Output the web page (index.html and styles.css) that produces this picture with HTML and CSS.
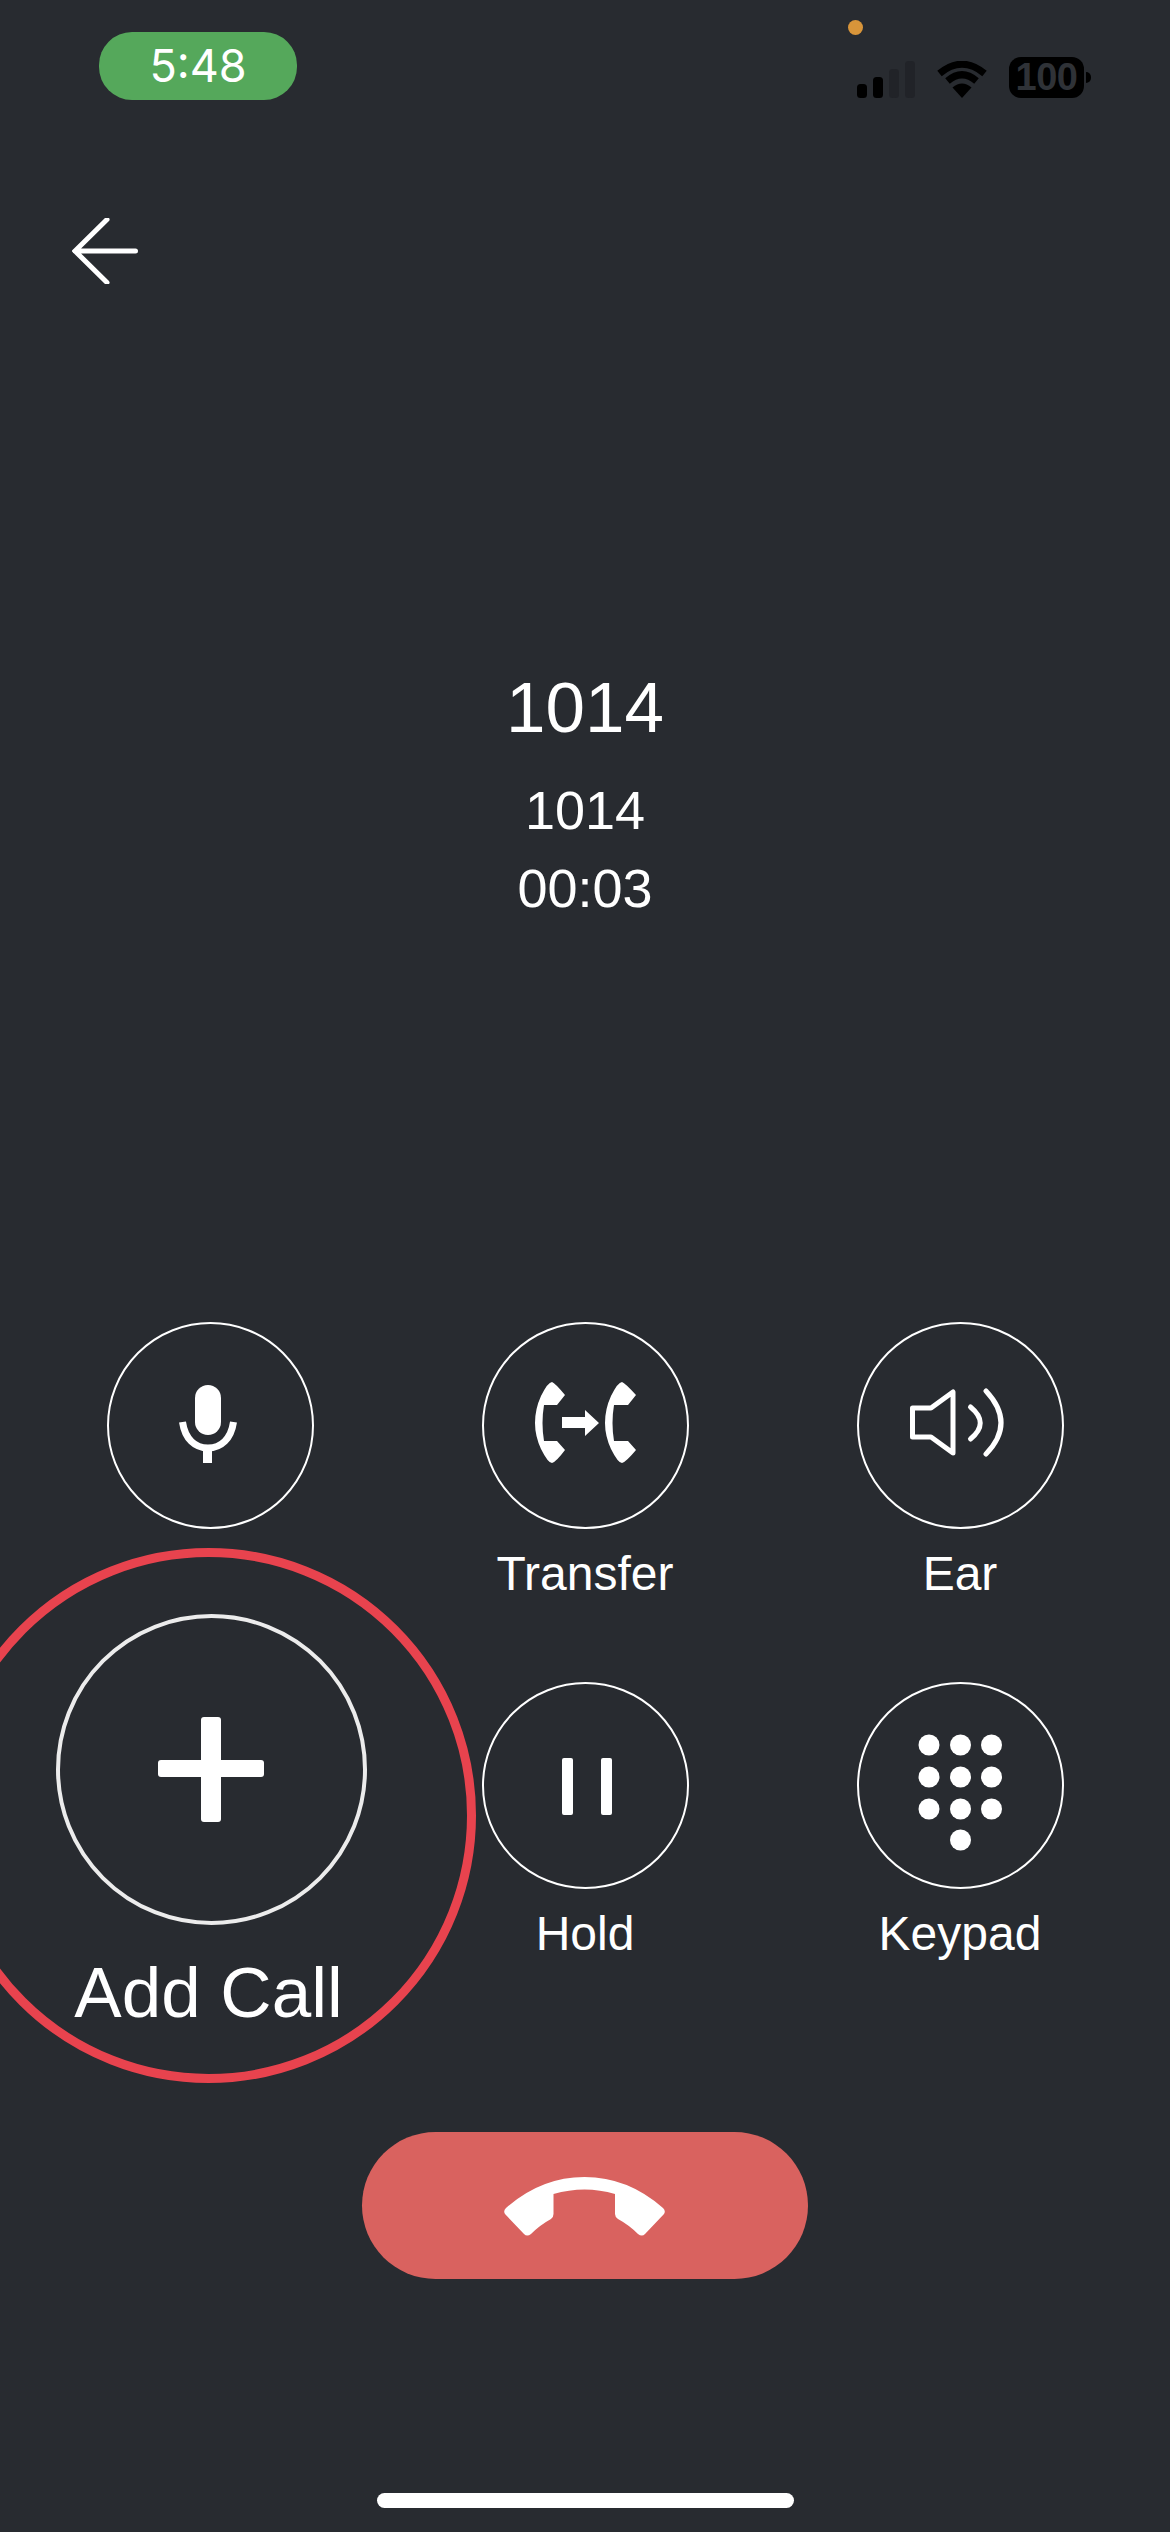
FILE: index.html
```html
<!DOCTYPE html>
<html lang="en">
<head>
<meta charset="utf-8">
<title>Call</title>
<link rel="stylesheet" href="styles.css">
</head>
<body>
<main class="screen">
  <header class="status">
    <div class="time">5:48</div>
    <div class="status-icons">
      <svg class="signal" viewBox="0 0 58 37" aria-hidden="true">
        <rect class="on" x="0" y="23" width="10" height="14" rx="3.5"/>
        <rect class="on" x="16" y="16" width="10" height="21" rx="3.5"/>
        <rect class="off" x="32" y="8" width="10" height="29" rx="3.5"/>
        <rect class="off" x="48" y="0" width="10" height="37" rx="3.5"/>
      </svg>
      <svg class="wifi" viewBox="0 0 50 37" aria-hidden="true">
        <path class="arc" d="M2.5 12.5 Q25 -6 47.5 12.5"/>
        <path class="arc" d="M10.5 20 Q25 7.5 39.5 20"/>
        <path class="wedge" d="M15.5 26.5 Q25 18.5 34.5 26.5 L25 37 Z"/>
      </svg>
      <div class="battery"><span class="battery-level">100</span><i class="battery-nub"></i></div>
    </div>
    <i class="privacy-dot"></i>
  </header>

  <button class="back" aria-label="Back">
    <svg viewBox="0 0 66 66" aria-hidden="true">
      <path d="M35 1.5 L3 33 L35 64.500 M3 33 H63.500"/>
    </svg>
  </button>

  <section class="info">
    <div class="name">1014</div>
    <div class="number">1014</div>
    <div class="timer">00:03</div>
  </section>

  <section class="controls">
    <div class="control">
      <div class="ring">
        <svg viewBox="107 1322 207 207" aria-hidden="true">
          <rect class="fill" x="196" y="1385" width="26" height="50" rx="13"/>
          <path class="mic-cradle" d="M183.500 1422 C186 1439 196 1448 209 1448 C222 1448 232 1439 234.500 1422"/>
          <rect class="fill" x="204" y="1446" width="9" height="17"/>
        </svg>
      </div>
    </div>
    <div class="control">
      <div class="ring">
        <svg viewBox="481 1322 207 207" aria-hidden="true">
          <path id="handset" class="fill" d="M552 1382 Q555 1383 565 1395 L557 1405 H544 Q541 1423 544 1441 H557 L565 1450 Q556 1462 552 1463 Q548 1463 541 1449 Q535 1436 535 1423 Q535 1409 541 1396 Q548 1382 552 1382 Z"/>
          <path class="fill" d="M562 1417 H585 V1410 L599 1423 L585 1436 V1428 H562 Z"/>
          <path class="fill" d="M622 1382 Q625 1383 636 1395 L628 1405 H614 Q611 1423 614 1441 H628 L636 1450 Q626 1462 622 1463 Q618 1463 611 1449 Q605 1436 605 1423 Q605 1409 611 1396 Q618 1382 622 1382 Z"/>
        </svg>
      </div>
      <div class="label">Transfer</div>
    </div>
    <div class="control">
      <div class="ring">
        <svg viewBox="857 1322 207 207" aria-hidden="true">
          <path class="line" d="M913.500 1408 H932 L954 1392 V1453 L932 1437 H913.500 Z"/>
          <path class="line" d="M971.500 1407 Q991 1423 971.500 1439"/>
          <path class="line" d="M987 1391 Q1017 1423 987 1454"/>
        </svg>
      </div>
      <div class="label">Ear</div>
    </div>
    <div class="control"></div>
    <div class="control">
      <div class="ring">
        <svg viewBox="482 1682 207 207" aria-hidden="true">
          <rect class="fill" x="563" y="1758" width="11" height="57" rx="2"/>
          <rect class="fill" x="602" y="1758" width="11" height="57" rx="2"/>
        </svg>
      </div>
      <div class="label">Hold</div>
    </div>
    <div class="control">
      <div class="ring">
        <svg viewBox="857 1682 207 207" aria-hidden="true">
          <circle class="fill" cx="930" cy="1745" r="10.500"/>
          <circle class="fill" cx="961.500" cy="1745" r="10.500"/>
          <circle class="fill" cx="992.500" cy="1745" r="10.500"/>
          <circle class="fill" cx="930" cy="1777" r="10.500"/>
          <circle class="fill" cx="961.500" cy="1777" r="10.500"/>
          <circle class="fill" cx="992.500" cy="1777" r="10.500"/>
          <circle class="fill" cx="930" cy="1809" r="10.500"/>
          <circle class="fill" cx="961.500" cy="1809" r="10.500"/>
          <circle class="fill" cx="992.500" cy="1809" r="10.500"/>
          <circle class="fill" cx="961.500" cy="1840" r="10.500"/>
        </svg>
      </div>
      <div class="label">Keypad</div>
    </div>
  </section>

  <button class="hangup" aria-label="End call">
    <svg viewBox="362 2132 446 147" aria-hidden="true">
      <path class="fill" d="M506 2208 Q541 2177 584.500 2177 Q628 2177 663 2208 Q666 2211 664 2214 L645 2234 Q642 2237 638 2234 Q629 2225 618 2219 Q615 2217 615 2214 V2194 Q600 2189.500 584.500 2189.500 Q569 2189.500 553.500 2194 V2214 Q553.500 2217 551 2219 Q540 2225 531 2234 Q527 2237 524 2234 L505 2214 Q503 2211 506 2208 Z"/>
    </svg>
  </button>

  <div class="home-bar"></div>

  <aside class="callout">
    <div class="callout-ring">
      <svg viewBox="0 0 311 311" aria-hidden="true">
        <rect class="fill" x="102" y="146" width="106" height="17" rx="3"/>
        <rect class="fill" x="145" y="103" width="20" height="105" rx="3"/>
      </svg>
    </div>
    <div class="callout-label">Add Call</div>
  </aside>
</main>
</body>
</html>
```
FILE: styles.css
```css
* { box-sizing: border-box; }

html, body {
  margin: 0;
  padding: 0;
  background: #282b30;
}

.screen {
  position: relative;
  width: 1170px;
  height: 2532px;
  overflow: hidden;
  background: #282b30;
  color: #fff;
  font-family: "Liberation Sans", Arial, sans-serif;
  display: flex;
  flex-direction: column;
}

svg { display: block; }

.fill { fill: #fff; }

.line {
  fill: none;
  stroke: #fff;
  stroke-width: 5;
  stroke-linecap: round;
  stroke-linejoin: round;
}

.mic-cradle {
  fill: none;
  stroke: #fff;
  stroke-width: 7;
}

/* status bar */
.status {
  position: relative;
  display: flex;
  justify-content: space-between;
  align-items: flex-start;
  height: 100px;
  margin-top: 32px;
  padding: 0 86px 0 99px;
}

.time {
  width: 198px;
  height: 68px;
  border-radius: 33px;
  background: #55a85b;
  font-family: Inter, "Liberation Sans", sans-serif;
  font-size: 45px;
  font-weight: 400;
  line-height: 68px;
  text-align: center;
}

.status-icons {
  display: flex;
  align-items: flex-end;
  gap: 22px;
  height: 41px;
  margin-top: 25px;
}

.signal { width: 58px; height: 37px; }
.signal .on { fill: #000; }
.signal .off { fill: #212328; }

.wifi { width: 50px; height: 37px; }
.wifi .arc { fill: none; stroke: #000; stroke-width: 7; }
.wifi .wedge { fill: #000; }

.battery {
  position: relative;
  width: 75px;
  height: 41px;
  border-radius: 12px;
  background: #000;
  color: #2f3237;
  font-size: 38px;
  font-weight: 700;
  line-height: 41px;
  text-align: center;
  letter-spacing: -0.5px;
}

.battery-nub {
  position: absolute;
  left: 77px;
  top: 15px;
  width: 5px;
  height: 11px;
  border-radius: 0 6px 6px 0;
  background: #000;
}

.privacy-dot {
  position: absolute;
  left: 848px;
  top: -12px;
  width: 15px;
  height: 15px;
  border-radius: 50%;
  background: #d8953a;
}

/* back */
.back {
  display: block;
  align-self: flex-start;
  width: 66px;
  height: 66px;
  margin: 86px 0 0 72px;
  padding: 0;
  border: 0;
  background: none;
}

.back svg { width: 66px; height: 66px; }

.back path {
  fill: none;
  stroke: #fff;
  stroke-width: 5;
  stroke-linecap: round;
  stroke-linejoin: miter;
}

/* call info */
.info {
  display: flex;
  flex-direction: column;
  align-items: center;
  margin-top: 384px;
}

.name {
  font-size: 71px;
  line-height: 80px;
}

.number {
  margin-top: 31px;
  font-size: 54px;
  line-height: 62px;
}

.timer {
  margin-top: 16px;
  font-size: 54px;
  line-height: 62px;
}

/* control grid */
.controls {
  display: grid;
  grid-template-columns: repeat(3, 375px);
  grid-auto-rows: 360px;
  justify-content: center;
  margin-top: 403px;
}

.control {
  display: flex;
  flex-direction: column;
  align-items: center;
}

.ring {
  width: 207px;
  height: 207px;
  border: 2.500px solid #fff;
  border-radius: 50%;
  position: relative;
}

.ring svg {
  position: absolute;
  inset: -2.500px;
  width: 207px;
  height: 207px;
}

.label {
  margin-top: 18px;
  font-size: 48px;
  line-height: 54px;
  text-align: center;
}

/* end call */
.hangup {
  display: block;
  align-self: center;
  width: 446px;
  height: 147px;
  margin-top: 90px;
  padding: 0;
  border: 0;
  border-radius: 74px;
  background: #d9625f;
}

.hangup svg { width: 446px; height: 147px; }

.home-bar {
  align-self: center;
  width: 417px;
  height: 15px;
  margin-top: 214px;
  border-radius: 7.5px;
  background: #fff;
}

/* magnified Add Call callout */
.callout {
  position: absolute;
  left: -59px;
  top: 1548px;
  width: 535px;
  height: 535px;
  border: 9px solid #e8434e;
  border-radius: 50%;
  background: #282b30;
  display: flex;
  flex-direction: column;
  align-items: center;
}

.callout-ring {
  width: 311px;
  height: 311px;
  margin: 57px 0 0 5px;
  border: 4px solid #ececec;
  border-radius: 50%;
  position: relative;
}

.callout-ring svg {
  position: absolute;
  inset: -4px;
  width: 311px;
  height: 311px;
}

.callout-label {
  margin-top: 27px;
  font-size: 71px;
  line-height: 82px;
}
```
